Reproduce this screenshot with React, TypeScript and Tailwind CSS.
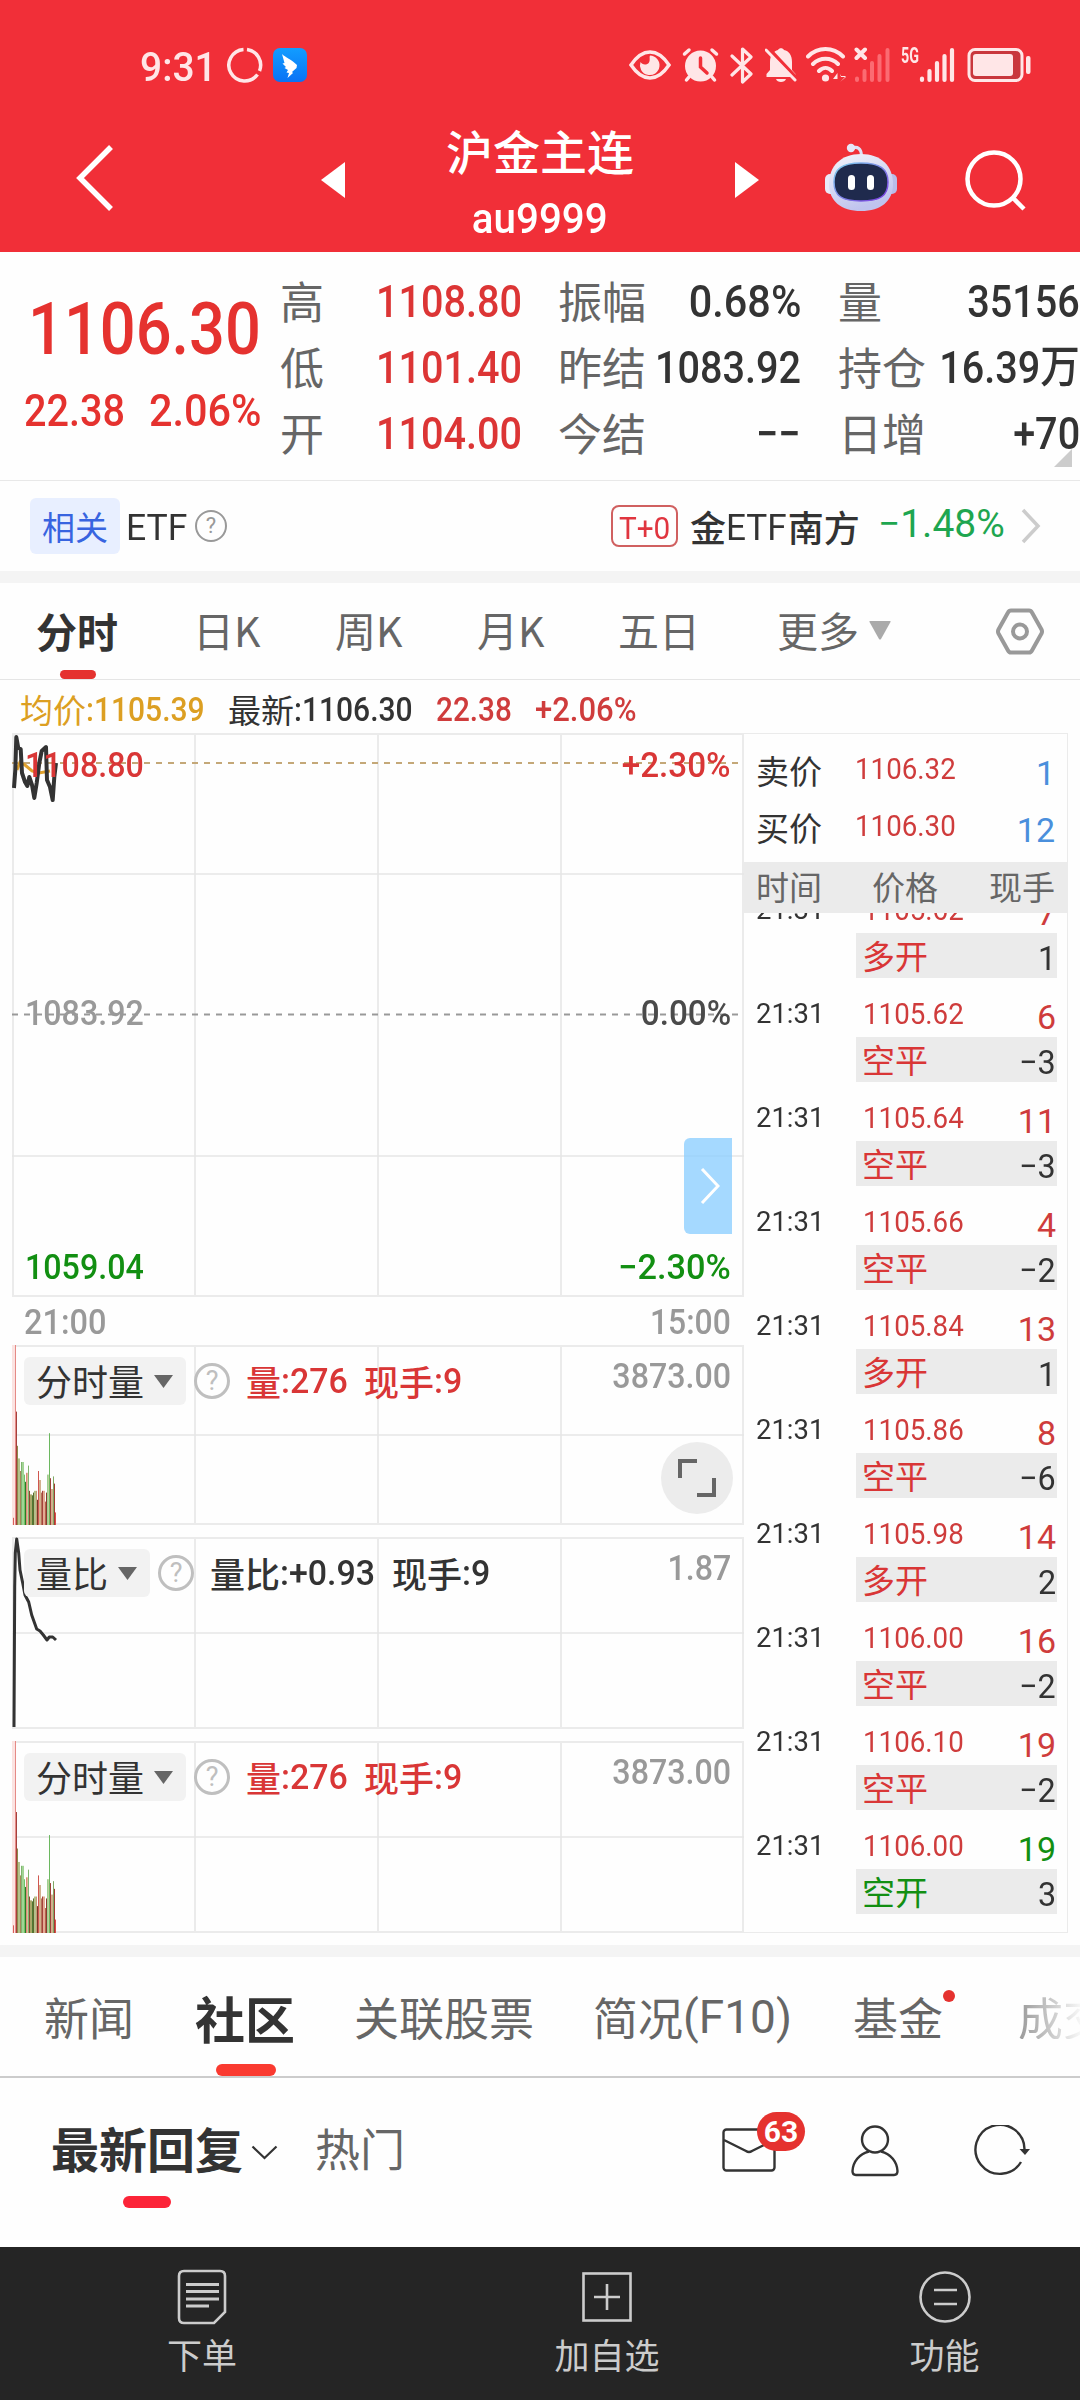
import type { ReactNode } from 'react';
import { clsx } from 'clsx';

const quotes = [
    [
        { label: '高', value: '1108.80', red: true },
        { label: '低', value: '1101.40', red: true },
        { label: '开', value: '1104.00', red: true },
    ],
    [
        { label: '振幅', value: '0.68%' },
        { label: '昨结', value: '1083.92' },
        { label: '今结', value: '−−' },
    ],
    [
        { label: '量', value: '35156' },
        { label: '持仓', value: '16.39万' },
        { label: '日增', value: '+70' },
    ],
];

const trades = [
    { price: '1105.62', qty: '7', kind: '多开', diff: '1' },
    { price: '1105.62', qty: '6', kind: '空平', diff: '−3' },
    { price: '1105.64', qty: '11', kind: '空平', diff: '−3' },
    { price: '1105.66', qty: '4', kind: '空平', diff: '−2' },
    { price: '1105.84', qty: '13', kind: '多开', diff: '1' },
    { price: '1105.86', qty: '8', kind: '空平', diff: '−6' },
    { price: '1105.98', qty: '14', kind: '多开', diff: '2' },
    { price: '1106.00', qty: '16', kind: '空平', diff: '−2' },
    { price: '1106.10', qty: '19', kind: '空平', diff: '−2' },
    { price: '1106.00', qty: '19', kind: '空开', diff: '3', green: true },
];

// [x, width, height ratio, color]
const volumeBars: [number, number, number, string][] = [
    [0, 4, 1, '#fbe3e1'],
    [1, 1, 0.04, '#d9605a'],
    [3, 1, 1, '#e58a86'],
    [4, 1, 0.63, '#a5413c'],
    [5, 1, 0.44, '#8c8a4a'],
    [6, 2, 0.37, '#b3c08a'],
    [8, 1, 0.3, '#a5875a'],
    [9, 1, 0.35, '#7fb56f'],
    [10, 2, 0.35, '#a2d495'],
    [12, 1, 0.28, '#6fc566'],
    [13, 1, 0.24, '#2c7a2a'],
    [14, 1, 0.29, '#d98f78'],
    [15, 1, 0.29, '#e3b79c'],
    [16, 1, 0.33, '#7fb56f'],
    [17, 1, 0.19, '#8a4a30'],
    [18, 2, 0.17, '#a9a868'],
    [20, 1, 0.165, '#4f7a35'],
    [21, 1, 0.18, '#5e6b2e'],
    [22, 2, 0.19, '#b3c08a'],
    [24, 1, 0.19, '#c79a78'],
    [25, 1, 0.14, '#7a3a26'],
    [26, 1, 0.3, '#d0574f'],
    [27, 2, 0.25, '#d3b08f'],
    [29, 1, 0.18, '#b5735a'],
    [30, 1, 0.19, '#a5413c'],
    [31, 2, 0.19, '#e3ab93'],
    [33, 1, 0.13, '#b5634f'],
    [34, 1, 0.18, '#8a3a2e'],
    [35, 1, 0.28, '#9ed092'],
    [36, 1, 0.28, '#bfcf9c'],
    [37, 1, 0.51, '#6cb860'],
    [38, 1, 0.26, '#a0413a'],
    [39, 2, 0.2, '#d3b08f'],
    [41, 1, 0.27, '#7fa864'],
    [42, 1, 0.23, '#a33a34'],
    [43, 1, 0.07, '#d9504a'],
];

// Condensed numerals used for prices
function Num({ children, className }: { children: ReactNode; className?: string }) {
    return (
        <span className={clsx('inline-block whitespace-nowrap font-[Roboto,"Noto_Sans_CJK_SC",sans-serif] leading-none', className)}>
            {children}
        </span>
    );
}

function Grid({ height, lines, children }: { height: number; lines: number[]; children?: ReactNode }) {
    return (
        <svg className="absolute inset-0" width="732" height={height} viewBox={`0 0 732 ${height}`} fill="none">
            <rect x="1" y="1" width="730" height={height - 2} stroke="#ebebeb" strokeWidth="2" />
            {[183, 366, 549].map(x => (
                <path key={x} d={`M${x} 0V${height}`} stroke="#ebebeb" strokeWidth="2" />
            ))}
            {lines.map(y => (
                <path key={y} d={`M0 ${y}H732`} stroke="#e6e6e6" strokeWidth="1.6" />
            ))}
            {children}
        </svg>
    );
}

function Help({ className }: { className?: string }) {
    return (
        <span className={clsx('flex shrink-0 items-center justify-center rounded-full leading-none', className)}>?</span>
    );
}

function PanelHead({ name, value, max, red }: { name: string; value: [string, string]; max: string; red?: boolean }) {
    return (
        <div className="relative flex items-start pl-3 pr-[13px] pt-3">
            <div className="flex h-12 items-center gap-[10px] rounded-md bg-[#f2f2f2] pl-3 pr-[13px]">
                <span className="-mt-[3px] text-[36px] leading-none">{name}</span>
                <svg width="19" height="13" viewBox="0 0 19 13"><path d="M0 0H19L9.500 13Z" fill="#666" /></svg>
            </div>
            <Help className="ml-2 mt-[6px] size-9 border-[3px] border-[#bfbfbf] font-[Roboto] text-[27px] text-[#bfbfbf]" />
            <div className={clsx('ml-4 flex h-12 items-center gap-4 pb-[2px] text-[35px] font-medium leading-none', red ? 'text-[#d93636]' : 'text-[#333]')}>
                {value.map(v => {
                    const [k, n] = v.split(':');
                    return (
                        <span key={k} className="flex items-center">
                            {k}<Num className="-mr-[2px] mt-[2px] origin-left scale-x-[.97] text-[35px]">:{n}</Num>
                        </span>
                    );
                })}
            </div>
            <Num className="ml-auto mt-[2px] origin-right scale-x-[.92] text-[35px] font-medium text-[#999]">{max}</Num>
        </div>
    );
}

function VolumePanel({ height, mid }: { height: number; mid: number }) {
    return (
        <Grid height={height} lines={[mid]}>
            {volumeBars.map(([x, w, h, c]) => (
                <rect key={`${x}-${c}`} x={x} y={height - h * height} width={w} height={h * height} fill={c} />
            ))}
        </Grid>
    );
}

function StatusBar() {
    return (
        <div className="flex h-[130px] items-center pl-[140px] text-[#ffe6e7]">
            <Num className="mt-1 origin-left scale-x-[.95] text-[41px] font-medium">9:31</Num>
            <svg className="ml-[6px]" width="36" height="36" viewBox="0 0 36 36" fill="none" stroke="currentColor" strokeWidth="3.500">
                <path d="M20 2.500A15.800 15.800 0 0 1 32.500 24" />
                <path d="M30.500 27.500A15.800 15.800 0 1 1 16.500 2.500" />
            </svg>
            <svg className="ml-[10px]" width="34" height="34" viewBox="0 0 34 34">
                <defs>
                    <linearGradient id="ding" x1="0" y1="0" x2="0" y2="1">
                        <stop offset="0" stopColor="#129dff" />
                        <stop offset="1" stopColor="#0a72f5" />
                    </linearGradient>
                </defs>
                <rect width="34" height="34" rx="7" fill="url(#ding)" />
                <path d="M9 6C12 9 19 12 24 17L23.500 20L19 24L20 25L14.500 30L16 25L13.500 24.500L15 22L11.500 20L13 19L9.500 15.500L11.500 15Z" fill="#fff" />
            </svg>
            <div className="ml-[322px] flex items-center">
                <svg width="42" height="30" viewBox="0 0 42 30" fill="none">
                    <path d="M2 15C8 6 14 2 21 2S34 6 40 15C34 24 28 28 21 28S8 24 2 15Z" stroke="currentColor" strokeWidth="3.500" />
                    <path d="M21 5.500A9.800 9.800 0 1 1 11.500 12C13 15 18 15.500 20 12.500C21.500 10 20 7 21 5.500Z" fill="currentColor" />
                </svg>
                <svg className="ml-[11px]" width="37" height="36" viewBox="0 0 37 36" fill="none" stroke="currentColor" strokeLinecap="round">
                    <circle cx="18.500" cy="19" r="15.500" fill="currentColor" stroke="none" />
                    <path d="M2.500 7L7 3M34.500 7L30 3M7 30L4.500 33M30 30L32.500 33" strokeWidth="3.500" />
                    <path d="M18.500 11V20L25 26" stroke="#f12f38" strokeWidth="3.500" />
                </svg>
                <svg className="ml-[11px]" width="24" height="37" viewBox="0 0 24 37" fill="none" stroke="currentColor" strokeWidth="3.200" strokeLinejoin="round" strokeLinecap="round">
                    <path d="M2 9L21 27L12.500 35V2L21 10L2 28" />
                </svg>
                <svg className="ml-[11px]" width="32" height="36" viewBox="0 0 32 36">
                    <path d="M1.500 30V27L5 23V15C5 8 9 4 13 3C14 .5 18 .5 19 3C24 4 27 8 27 15V23L30.500 27V30ZM11 32H21C20 36 12 36 11 32Z" fill="currentColor" />
                    <path d="M3 1L33 33" stroke="#f12f38" strokeWidth="4" />
                    <path d="M1 3L30 33" stroke="currentColor" strokeWidth="3" strokeLinecap="round" />
                </svg>
                <svg className="ml-[9px]" width="42" height="36" viewBox="0 0 42 36" fill="none" stroke="currentColor" strokeWidth="4" strokeLinecap="round">
                    <path d="M2 9.500C12 -.5 27 -.5 37 9.500M7 17C14 10 25 10 32 17M13 24C17 20 22 20 26 24" />
                    <circle cx="19.500" cy="31" r="3.600" fill="currentColor" stroke="none" />
                    <path d="M27 32H31.500V26ZM34 35V27L35 30H40ZM34 35L40 29H34Z" fill="currentColor" stroke="none" />
                </svg>
                <svg className="ml-[6px]" width="36" height="36" viewBox="0 0 36 36" strokeLinecap="round" strokeWidth="4">
                    <path d="M2.500 2.500L11 11M11 2.500L2.500 11" stroke="currentColor" />
                    <path d="M3 33V31.500M10.500 33V24M18 33V16M25.500 33V9M33.500 33V3" stroke="#fb6b72" />
                </svg>
                <Num className="-mr-[9px] mb-[18px] ml-[11px] origin-left scale-x-[.65] text-[22px] font-bold">5G</Num>
                <svg width="36" height="36" viewBox="0 0 36 36" strokeLinecap="round" strokeWidth="4.200" stroke="currentColor">
                    <path d="M3 33V31.500M10.500 33V24M18 33V16M25.500 33V9M33 33V3" />
                </svg>
                <svg className="ml-3" width="64" height="36" viewBox="0 0 64 36" fill="none">
                    <rect x="2" y="2.500" width="53" height="31" rx="6" fill="#c9373d" stroke="currentColor" strokeWidth="3" />
                    <rect x="6" y="7" width="40" height="22" rx="3" fill="currentColor" />
                    <rect x="59" y="9" width="4.500" height="18" rx="2" fill="currentColor" />
                </svg>
            </div>
        </div>
    );
}

function Robot() {
    return (
        <svg width="74" height="68" viewBox="0 0 74 68" fill="none">
            <defs>
                <linearGradient id="shell" x1="0" y1="0" x2=".4" y2="1">
                    <stop offset="0" stopColor="#f4f5fb" />
                    <stop offset="1" stopColor="#bfc3ee" />
                </linearGradient>
                <linearGradient id="rim" x1="0" y1="0" x2="1" y2="1">
                    <stop offset="0" stopColor="#7fd4ee" />
                    <stop offset="1" stopColor="#7a35e0" />
                </linearGradient>
            </defs>
            <path d="M28 5C34 3 37 6 37.500 12" stroke="#dfe0f5" strokeWidth="3" />
            <circle cx="27" cy="5" r="4.200" fill="#e6e7f8" />
            <rect x="1" y="31" width="12" height="20" rx="5" fill="#e9eaf8" />
            <rect x="61" y="31" width="12" height="20" rx="5" fill="#b9bde9" />
            <path d="M37 11C57 11 69 23 69 41C69 58 57 68 37 68S5 58 5 41C5 23 17 11 37 11Z" fill="url(#shell)" />
            <path d="M37 20C56 20 64 26 64 39C64 53 56 58 37 58S10 53 10 39C10 26 18 20 37 20Z" fill="#1f2a4d" stroke="url(#rim)" strokeWidth="1.500" />
            <rect x="24" y="32" width="7" height="15" rx="3.500" fill="#fff" />
            <rect x="43" y="32" width="7" height="15" rx="3.500" fill="#fff" />
        </svg>
    );
}

function Header() {
    return (
        <header className="h-[252px] bg-[#f12f38] text-white">
            <StatusBar />
            <div className="flex h-[122px] items-start">
                <svg className="ml-[76px] mt-[15px]" width="38" height="66" viewBox="0 0 38 66" fill="none">
                    <path d="M35 2L4 33L35 64" stroke="#fff" strokeWidth="5.500" />
                </svg>
                <svg className="ml-[207px] mt-8" width="24" height="36" viewBox="0 0 24 36"><path d="M24 0V36L0 18Z" fill="#fff" /></svg>
                <div className="flex w-[390px] flex-col items-center">
                    <h1 className="-mt-[3px] text-[47px] font-medium leading-[46px]">沪金主连</h1>
                    <Num className="mt-[25px] scale-x-[.96] text-[42px] font-medium">au9999</Num>
                </div>
                <svg className="mt-8" width="24" height="36" viewBox="0 0 24 36"><path d="M0 0V36L24 18Z" fill="#fff" /></svg>
                <div className="ml-[65px] mt-[13px]"><Robot /></div>
                <svg className="ml-[67px] mt-[19px]" width="62" height="62" viewBox="0 0 62 62" fill="none" stroke="#fff" strokeWidth="4.500">
                    <circle cx="29" cy="30" r="26.500" />
                    <path d="M48 49L59 60" />
                </svg>
            </div>
        </header>
    );
}

function QuotePanel() {
    const widths = ['w-[242px]', 'w-[243px] ml-[36px]', 'w-[242px] ml-[37px]'];
    return (
        <section className="relative flex h-[229px] border-b border-[#e8e8e8] pt-4">
            <div className="w-[280px] pt-[25px] text-[#e5322f]">
                <Num className="ml-[28px] origin-left scale-x-[.865] text-[73px] font-medium">1106.30</Num>
                <div className="mt-[22px] flex">
                    <Num className="ml-6 w-[125px] origin-left scale-x-[.88] text-[45px] font-medium">22.38</Num>
                    <Num className="origin-left scale-x-[.92] text-[45px] font-medium">2.06%</Num>
                </div>
            </div>
            {quotes.map((col, i) => (
                <div key={i} className={widths[i]}>
                    {col.map(q => (
                        <div key={q.label} className="flex h-[66px] items-center justify-between whitespace-nowrap">
                            <span className="-mt-[3px] text-[44px] leading-none text-[#666]">{q.label}</span>
                            <Num className={clsx(
                                '-ml-8 origin-right text-[45px] font-medium',
                                q.value.endsWith('%') ? 'scale-x-[.92]' : 'scale-x-[.88]',
                                q.red ? 'text-[#dc3535]' : 'text-[#333]',
                            )}>{q.value}</Num>
                        </div>
                    ))}
                </div>
            ))}
            <svg className="absolute bottom-[13px] right-[8px]" width="18" height="18" viewBox="0 0 18 18"><path d="M18 0V18H0Z" fill="#ccc" /></svg>
        </section>
    );
}

function EtfRow() {
    return (
        <section className="flex h-[90px] items-center pl-[30px]">
            <span className="flex h-14 w-[90px] items-center justify-center rounded-md bg-[#e8efff] text-[33px] leading-none text-[#3864e0]">相关</span>
            <Num className="ml-[6px] mt-[3px] origin-left scale-x-[.96] text-[37px] text-[#333]">ETF</Num>
            <Help className="ml-[5px] size-8 border-2 border-[#999] font-[Roboto] text-[22px] text-[#999]" />
            <span className="ml-[384px] flex h-[42px] w-[67px] items-center justify-center rounded-lg border-2 border-[#d06060]">
                <Num className="mt-[3px] scale-x-[.93] text-[32px] text-[#e0353f]">T+0</Num>
            </span>
            <span className="ml-3 flex items-center text-[36px] font-medium leading-none text-[#333]">
                金<Num className="-mr-[2px] mt-[3px] origin-left scale-x-[.95] text-[37px] font-normal">ETF</Num>南方
            </span>
            <Num className="ml-[18px] w-[143px] origin-left pb-1 text-[39px] text-[#1ea650]">−1.48%</Num>
            <svg width="20" height="36" viewBox="0 0 20 36" fill="none"><path d="M2 2L17 18L2 34" stroke="#ccc" strokeWidth="3.500" /></svg>
        </section>
    );
}

function PeriodTabs() {
    return (
        <nav className="flex h-[97px] items-center border-b border-[#e5e5e5] pl-[36px] text-[41px] leading-none text-[#666]">
            <span className="relative flex h-full w-[157px] items-center pb-[2px] font-bold text-[#333]">
                分时
                <i className="absolute bottom-0 left-6 h-[9px] w-9 rounded-full bg-[#e5322f]" />
            </span>
            <span className="-mt-[3px] w-[142px]">日K</span>
            <span className="-mt-[3px] w-[142px]">周K</span>
            <span className="-mt-[3px] w-[141px]">月K</span>
            <span className="-mt-[3px] w-[159px]">五日</span>
            <span className="-mt-[3px]">更多</span>
            <svg className="-mt-[2px] ml-[10px]" width="22" height="19" viewBox="0 0 22 19"><path d="M1 0H21Q22 0 21.500 1L12 18Q11 19 10 18L.5 1Q0 0 1 0Z" fill="#aaa" /></svg>
            <svg className="ml-[105px]" width="48" height="47" viewBox="0 0 48 47" fill="none" stroke="#999">
                <path d="M15 2.500H33Q35 2.500 36 4.500L45.500 21.500Q46.500 23.500 45.500 25.500L36 42.500Q35 44.500 33 44.500H15Q13 44.500 12 42.500L2.500 25.500Q1.500 23.500 2.500 21.500L12 4.500Q13 2.500 15 2.500Z" strokeWidth="4" />
                <circle cx="24" cy="23.500" r="7" strokeWidth="4" />
            </svg>
        </nav>
    );
}

function PriceChart() {
    return (
        <div className="relative flex h-[564px] flex-col justify-between px-[13px] pb-3 pt-[15px] text-[35px] font-medium leading-none">
            <Grid height={564} lines={[141, 423]}>
                <path d="M0 30H732" stroke="#c4a878" strokeWidth="2" strokeDasharray="6 6" />
                <path d="M0 281.500H732" stroke="#999" strokeWidth="2" strokeDasharray="6 6" />
                <path d="M5 37L8 29L13 32L20 38L27 40L38 38" stroke="#e0a12c" strokeWidth="3" />
                <path d="M2 55L3.300 37L4.300 4L6.300 15L8.700 16L10 40L13 49L15.300 53L17.300 44L20 52L22.300 65L24.700 50L27.300 30L29.700 18L34 14L35 47L38 54L40.700 67L42.300 44L44 30" stroke="#333" strokeWidth="4" strokeLinejoin="round" />
            </Grid>
            <div className="relative flex justify-between text-[#d93636]">
                <Num className="origin-left scale-x-[.92]">1108.80</Num>
                <Num className="origin-right scale-x-[.95]">+2.30%</Num>
            </div>
            <div className="relative flex justify-between pb-[6px]">
                <Num className="origin-left scale-x-[.92] text-[#999]">1083.92</Num>
                <Num className="origin-right scale-x-[.95] text-[#4a4a4a]">0.00%</Num>
            </div>
            <div className="relative flex justify-between text-[#128f12]">
                <Num className="origin-left scale-x-[.92]">1059.04</Num>
                <Num className="origin-right scale-x-[.98]">−2.30%</Num>
            </div>
            <div className="absolute right-3 top-[405px] flex h-24 w-12 items-center justify-center rounded-l-md bg-[#8fd0ff]/80">
                <svg className="ml-1" width="20" height="36" viewBox="0 0 20 36" fill="none"><path d="M2 1L18 18L2 35" stroke="#fff" strokeWidth="3" /></svg>
            </div>
        </div>
    );
}

function Charts() {
    return (
        <div className="w-[732px]">
            <PriceChart />
            <div className="flex h-12 items-center justify-between pl-3 pr-[13px] pt-[2px] text-[#999]">
                <Num className="origin-left scale-x-[.93] text-[35px] font-medium">21:00</Num>
                <Num className="origin-right scale-x-[.91] text-[35px] font-medium">15:00</Num>
            </div>
            <div className="relative h-[180px]">
                <VolumePanel height={180} mid={90} />
                <PanelHead name="分时量" value={['量:276', '现手:9']} max="3873.00" red />
                <div className="absolute bottom-[11px] right-[11px] flex size-[72px] items-center justify-center rounded-full bg-[#ececec]">
                    <svg width="38" height="38" viewBox="0 0 38 38" fill="none" stroke="#666" strokeWidth="4">
                        <path d="M2 19V2H19M36 19V36H19" />
                    </svg>
                </div>
            </div>
            <div className="relative mt-3 h-[192px]">
                <Grid height={192} lines={[96]}>
                    <path d="M2 190L2.700 50L3.300 16L4.700 2L6.700 16L8 33L10.700 46L13 58L16.700 65L19.700 78L24.700 92L28 94L31.300 98L35 103L37.300 100L40.700 100L44 103" stroke="#333" strokeWidth="3" strokeLinejoin="round" />
                </Grid>
                <PanelHead name="量比" value={['量比:+0.93', '现手:9']} max="1.87" />
            </div>
            <div className="relative mt-3 h-[192px]">
                <VolumePanel height={192} mid={96} />
                <PanelHead name="分时量" value={['量:276', '现手:9']} max="3873.00" red />
            </div>
        </div>
    );
}

function OrderBook() {
    return (
        <aside className="flex h-[1200px] w-[324px] flex-col border border-l-0 border-[#ebebeb] text-[34px] leading-none">
            <div className="flex flex-col pb-[4px] pt-[10px]">
                {[['卖价', '1106.32', '1'], ['买价', '1106.30', '12']].map(([side, price, qty]) => (
                    <div key={side} className="flex h-[57px] items-center pl-3 pr-3">
                        <span className="-mt-[5px] w-[99px] text-[33px] text-[#333]">{side}</span>
                        <Num className="origin-left scale-x-[.955] pb-[6px] text-[29px] text-[#cf3c3c]">{price}</Num>
                        <Num className="ml-auto text-[34px] text-[#4a8fdc]">{qty}</Num>
                    </div>
                ))}
            </div>
            <div className="flex h-[51px] shrink-0 items-center justify-between bg-[#ebebeb] pb-[2px] pl-3 pr-3 text-[#666]">
                <span className="w-[116px] text-[33px]">时间</span>
                <span className="flex-1 text-[33px]">价格</span>
                <span className="text-[33px]">现手</span>
            </div>
            <div className="flex-1 overflow-hidden">
                <div className="-mt-[39px]">
                    {trades.map((t, i) => (
                        <div key={i} className="h-[104px] pr-[10px] pt-[13px]">
                            <div className="flex h-[46px] items-center pl-3">
                                <Num className="w-[107px] origin-left scale-x-[.98] text-[28px] text-[#333]">21:31</Num>
                                <Num className="origin-left scale-x-[.955] text-[29px] text-[#cf3c3c]">{t.price}</Num>
                                <Num className={clsx('ml-auto pr-[1px] pt-[6px] text-[34px]', t.green ? 'text-[#128f12]' : 'text-[#cf3c3c]')}>{t.qty}</Num>
                            </div>
                            <div className="ml-[112px] flex h-[45px] items-center justify-between bg-[#ebebeb] pl-[6px] pr-[1px]">
                                <span className={clsx('text-[33px]', t.green ? 'text-[#128f12]' : 'text-[#d93636]')}>{t.kind}</span>
                                <Num className="origin-right scale-x-[.95] pt-1 text-[34px] text-[#333]">{t.diff}</Num>
                            </div>
                        </div>
                    ))}
                </div>
            </div>
        </aside>
    );
}

function InfoTabs() {
    return (
        <nav className="relative flex h-[121px] items-center overflow-hidden whitespace-nowrap border-b-2 border-[#ccc] pl-[44px] text-[45px] leading-none text-[#666]">
            <span className="w-[151px] shrink-0">新闻</span>
            <span className="relative flex h-full w-[159px] shrink-0 items-center text-[50px] font-bold text-[#333]">
                社区
                <i className="absolute bottom-0 left-[21px] h-3 w-[60px] rounded-full bg-[#fa3a30]" />
            </span>
            <span className="w-[239px] shrink-0">关联股票</span>
            <span className="flex w-[260px] shrink-0 items-center">简况<Num className="origin-left text-[46px]">(F10)</Num></span>
            <span className="relative w-[165px] shrink-0">
                基金
                <i className="absolute -top-1 left-[90px] size-3 rounded-full bg-[#e5322f]" />
            </span>
            <span className="shrink-0 bg-gradient-to-r from-[#999] to-white to-75% bg-clip-text text-transparent">成交</span>
        </nav>
    );
}

function ReplyBar() {
    return (
        <section className="flex h-[169px] items-start pl-[51px] pt-[47px] leading-none text-[#333]">
            <div className="relative h-[83px] text-[48px] font-bold">
                <span className="-mt-[2px] block">最新回复</span>
                <i className="absolute bottom-0 left-[72px] h-3 w-12 rounded-full bg-[#fc2438]" />
            </div>
            <svg className="ml-[8px] mt-[20px]" width="27" height="15" viewBox="0 0 27 15" fill="none"><path d="M1.500 1.500L13.500 13L25.500 1.500" stroke="#333" strokeWidth="2.200" /></svg>
            <span className="ml-[37px] text-[45px] text-[#666]">热门</span>
            <div className="relative ml-[317px] mt-[3px]">
                <svg width="54" height="44" viewBox="0 0 54 44" fill="none" stroke="#333" strokeWidth="2.400">
                    <rect x="1.500" y="1.500" width="51" height="41" rx="3" />
                    <path d="M2 12L24 23Q27 25 30 23L52 12" />
                </svg>
                <span className="absolute -top-4 left-[35px] flex h-[39px] w-12 items-center justify-center rounded-full bg-[#e5322f]">
                    <Num className="text-[30px] font-bold text-white">63</Num>
                </span>
            </div>
            <svg className="ml-[75px] mt-0" width="48" height="52" viewBox="0 0 48 52" fill="none" stroke="#333" strokeWidth="2.400">
                <circle cx="24" cy="14.500" r="13" />
                <path d="M18 26.500C8 29 2 37 1.500 46Q1.500 50 5 50H43Q46.500 50 46.500 46C46 37 40 29 30 26.500" />
            </svg>
            <svg className="ml-[75px] mt-0" width="56" height="52" viewBox="0 0 56 52" fill="none">
                <path d="M47 37A24.500 24.500 0 1 1 50.500 25" stroke="#333" strokeWidth="2.400" />
                <path d="M45.500 24H56L51 30Z" fill="#333" />
            </svg>
        </section>
    );
}

function BottomBar() {
    return (
        <footer className="flex h-[153px] bg-[#252525] text-[35px] leading-none text-[#ccc]">
            <div className="flex w-[404px] flex-col items-center pt-[22px]">
                <svg width="50" height="56" viewBox="0 0 50 56" fill="none" stroke="#ccc" strokeWidth="2.600">
                    <path d="M7 2H43Q48 2 48 7V43L37 54H7Q2 54 2 49V7Q2 2 7 2Z" />
                    <path d="M9 15.500H42M9 22.500H42M9 30H42M9 37H32" strokeWidth="3" />
                </svg>
                <span className="mt-[11px]">下单</span>
            </div>
            <div className="flex w-[406px] flex-col items-center pt-[25px]">
                <svg width="50" height="50" viewBox="0 0 50 50" fill="none" stroke="#ccc" strokeWidth="2.600">
                    <rect x="1.500" y="1.500" width="47" height="47" />
                    <path d="M25 12V38M12 25H38" />
                </svg>
                <span className="mt-[14px]">加自选</span>
            </div>
            <div className="flex w-[269px] flex-col items-center pt-6">
                <svg width="52" height="52" viewBox="0 0 52 52" fill="none" stroke="#ccc" strokeWidth="2.600">
                    <circle cx="26" cy="26" r="24.500" />
                    <path d="M15 19H38M15 33H38" />
                </svg>
                <span className="mt-[13px]">功能</span>
            </div>
        </footer>
    );
}

export default function App() {
    return (
        <div className="h-[2400px] w-[1080px] overflow-hidden bg-[#fefefe] font-['Noto_Sans_CJK_SC',sans-serif] text-[#333]">
            <Header />
            <QuotePanel />
            <EtfRow />
            <div className="h-3 bg-[#f4f4f4]" />
            <PeriodTabs />
            <div className="flex h-[53px] items-center whitespace-nowrap pl-5 pt-[6px] text-[33px] leading-none">
                <span className="flex w-[208px] items-center text-[#dc9f22]">均价<Num className="origin-left scale-x-[.91] font-medium">:1105.39</Num></span>
                <span className="flex w-[208px] items-center">最新<Num className="origin-left scale-x-[.91] font-medium">:1106.30</Num></span>
                <Num className="w-[99px] origin-left scale-x-[.9] font-medium text-[#cf3c3c]">22.38</Num>
                <Num className="origin-left scale-x-[.94] font-medium text-[#cf3c3c]">+2.06%</Num>
            </div>
            <div className="flex h-[1212px] pl-3">
                <Charts />
                <OrderBook />
            </div>
            <div className="h-3 bg-[#f4f4f4]" />
            <InfoTabs />
            <ReplyBar />
            <BottomBar />
        </div>
    );
}
